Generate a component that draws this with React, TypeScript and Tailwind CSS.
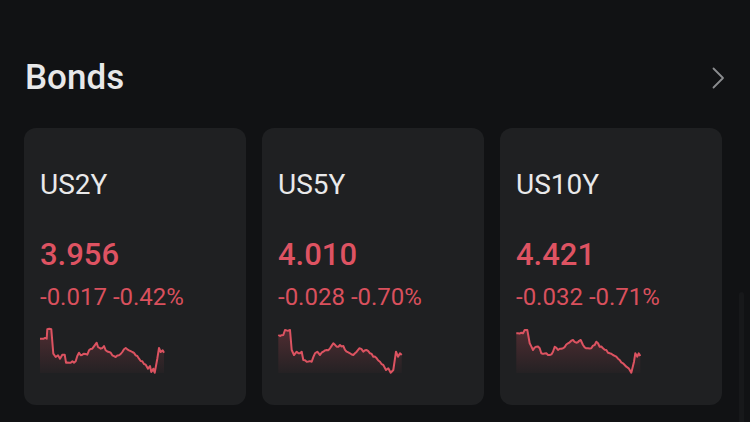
type Pt = [number, number];

interface Bond {
  name: string;
  price: string;
  change: string;
  pct: string;
  seed: number;
  points: Pt[];
}

const bonds: Bond[] = [
  {
    name: "US2Y",
    price: "3.956",
    change: "-0.017",
    pct: "-0.42%",
    seed: 7,
    points: [
      [0, 11.7], [6.7, 11.7], [7.3, 2.3], [11.3, 2.3], [13.3, 26.7], [15.7, 30], [18, 28.3],
      [20, 31.7], [22.3, 27.7], [24.7, 27.7], [26, 35.7], [30.7, 35.7], [35.7, 34.3], [37.3, 29],
      [39, 25.7], [40.7, 28.3], [44, 26.7], [47.3, 27.7], [49, 23.3], [52.3, 21.7], [54.7, 18.3],
      [56.7, 15.7], [58, 20], [60.7, 21.7], [64, 19], [65.7, 23.3], [69, 25], [72.3, 28.3],
      [75.7, 30], [79, 28.3], [82.3, 25], [85.7, 21], [89, 23.3], [92.3, 25], [95.7, 28.3],
      [99, 31.7], [102.3, 34.3], [105.7, 37.7], [108, 41.7], [110, 39], [111.3, 45], [113.3, 41.7],
      [114.7, 45.7], [117.3, 31.7], [119, 21], [120.7, 25], [122.7, 23.3], [124, 25.7],
    ],
  },
  {
    name: "US5Y",
    price: "4.010",
    change: "-0.028",
    pct: "-0.70%",
    seed: 19,
    points: [
      [0.3, 8], [5.3, 8], [7, 3], [12, 3], [13.7, 23], [16, 28], [18.7, 24.7], [22, 26.3],
      [23.7, 24.7], [25.3, 33], [28.7, 34.7], [33.7, 34.7], [37, 26.3], [39.3, 24.7], [42, 28],
      [45.3, 24.7], [48.7, 23], [52, 21.3], [55.3, 16.3], [58.7, 19.7], [62, 18], [65.3, 19],
      [68.7, 24.7], [72, 26.3], [75.3, 28], [78.7, 24.7], [81.3, 21.3], [85.3, 24.7], [88.7, 23],
      [92, 26.3], [95.3, 29.7], [98.7, 31.3], [102, 34.7], [105.3, 38], [108, 43], [110.3, 41.3],
      [112.7, 45.7], [115.3, 43], [118, 24.7], [120, 29.7], [122, 26.3], [123.7, 28],
    ],
  },
  {
    name: "US10Y",
    price: "4.421",
    change: "-0.032",
    pct: "-0.71%",
    seed: 31,
    points: [
      [0.3, 6.3], [7, 6.3], [8.7, 3], [11.3, 3], [13.7, 16.3], [17, 23], [20.3, 19.7], [23.7, 21.3],
      [25.3, 26.3], [30.3, 26.3], [33.7, 28], [37, 24.7], [38.7, 19.7], [42, 23], [47, 21.3],
      [52, 16.3], [57, 13], [60.3, 15.7], [64.7, 13], [67, 18], [70.3, 21.3], [75.3, 21.3],
      [78.7, 18], [80.3, 14.7], [83.7, 19.7], [87, 21.3], [90.3, 23], [93.7, 26.3], [97, 28],
      [100.3, 29.7], [103.7, 33], [107, 36.3], [110.3, 39.7], [112.7, 41.3], [115.3, 45.7],
      [118, 34.7], [119.3, 26.3], [121.3, 29.7], [122.7, 26.3], [124.3, 29],
    ],
  },
];

// add a little jitter between the key points so the line looks like tick data
const roughen = (pts: Pt[], seed: number): Pt[] => {
  let s = seed;
  const rand = () => {
    s = (s * 9301 + 49297) % 233280;
    return s / 233280;
  };
  const out: Pt[] = [];
  for (let i = 0; i < pts.length - 1; i++) {
    const [x0, y0] = pts[i];
    const [x1, y1] = pts[i + 1];
    out.push([x0, y0]);
    const steps = Math.floor((x1 - x0) / 1.4);
    for (let k = 1; k < steps; k++) {
      const t = k / steps;
      out.push([x0 + (x1 - x0) * t, y0 + (y1 - y0) * t + (rand() - 0.5) * 2.2]);
    }
  }
  out.push(pts[pts.length - 1]);
  return out;
};

function Sparkline({ points, seed, id }: { points: Pt[]; seed: number; id: string }) {
  const pts = roughen(points, seed);
  const line = pts.map(([x, y], i) => `${i ? "L" : "M"}${x.toFixed(1)} ${y.toFixed(1)}`).join(" ");
  const last = pts[pts.length - 1];
  const area = `${line} L${last[0].toFixed(1)} 46 L${pts[0][0].toFixed(1)} 46 Z`;

  return (
    <svg width="126" height="48" viewBox="0 0 126 48" className="block overflow-visible">
      <defs>
        <linearGradient id={id} x1="0" y1="0" x2="0" y2="1">
          <stop offset="0%" stopColor="#d9505d" stopOpacity="0.26" />
          <stop offset="100%" stopColor="#d9505d" stopOpacity="0.03" />
        </linearGradient>
      </defs>
      <path d={area} fill={`url(#${id})`} />
      <path d={line} fill="none" stroke="#dc5361" strokeWidth="2" strokeLinejoin="round" />
    </svg>
  );
}

export default function App() {
  return (
    <div
      className="relative w-[750px] h-[422px] overflow-hidden bg-[#111214]"
      style={{ fontFamily: "Roboto, 'Noto Sans', sans-serif" }}
    >
      {/* header */}
      <div className="flex items-center justify-between pl-[25px] pr-[25px] pt-[60px]">
        <h1 className="text-[35px] leading-[35px] font-medium text-[#e8e8e9]">Bonds</h1>
        <svg width="13" height="22" viewBox="0 0 13 22" fill="none" className="block">
          <path d="M1.5 1.5 L11 11 L1.5 20.5" stroke="#8b8c8f" strokeWidth="1.8" strokeLinecap="round" strokeLinejoin="round" />
        </svg>
      </div>

      {/* cards */}
      <div className="flex gap-4 pl-6 mt-[33px]">
        {bonds.map((b) => (
          <div key={b.name} className="w-[222px] h-[277px] rounded-[12px] bg-[#1f2022] pl-4 pt-[43px]">
            <div className="text-[28px] leading-[28px] text-[#e9e9ea]">{b.name}</div>
            <div className="mt-[40px] text-[31px] leading-[31px] font-medium text-[#de5362]">{b.price}</div>
            <div className="mt-[15px] text-[24px] leading-[24px] text-[#d9505d]">
              {b.change} {b.pct}
            </div>
            <div className="mt-[18px]">
              <Sparkline points={b.points} seed={b.seed} id={`g-${b.name}`} />
            </div>
          </div>
        ))}
      </div>

      {/* faint scrollbar overlay */}
      <div className="absolute right-[6px] top-[292px] w-[5px] h-[140px] rounded-full bg-[#17181a]" />
    </div>
  );
}
